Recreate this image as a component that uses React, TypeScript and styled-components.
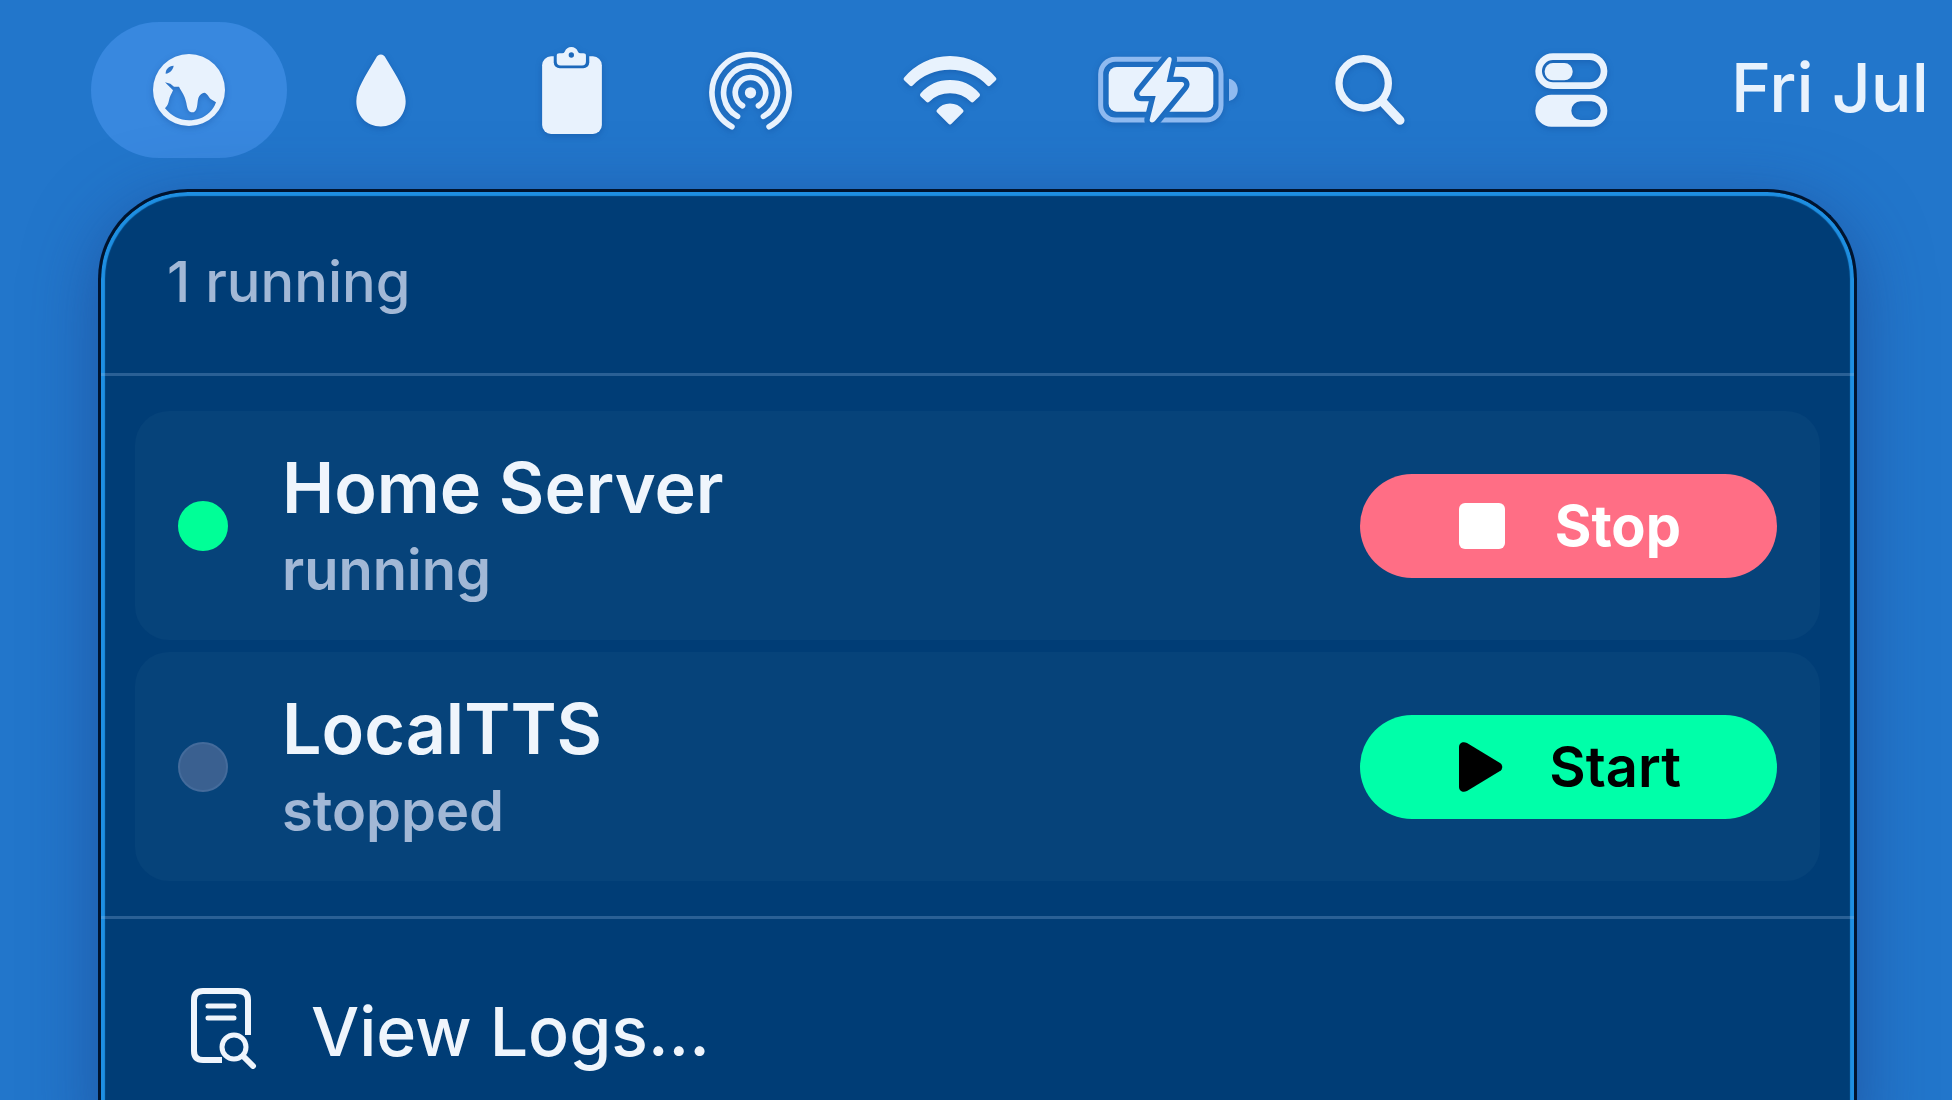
import React from "react";
import styled, { createGlobalStyle } from "styled-components";

const GlobalStyle = createGlobalStyle`
  *, *::before, *::after { box-sizing: border-box; }
  html, body, #root { height: 100%; }
  body {
    margin: 0;
    overflow: hidden;
    background: #2276cb;
    font-family: Inter, "Liberation Sans", sans-serif;
  }
  button {
    border: 0;
    padding: 0;
    background: none;
    color: inherit;
    font: inherit;
    cursor: pointer;
  }
  svg { display: block; flex: none; }
`;

const Desktop = styled.div`
  height: 100%;
  display: flex;
  flex-direction: column;
  overflow: hidden;
`;

const MenuBar = styled.header`
  flex: none;
  display: flex;
  align-items: center;
  padding: 22px 0 31px 91px;
  color: #e8f2fd;
`;

const StatusItem = styled.button<{ $width: number; $active?: boolean }>`
  flex: none;
  width: ${(p) => p.$width}px;
  height: 136px;
  display: flex;
  align-items: center;
  justify-content: center;
  border-radius: 68px;
  background: ${(p) => (p.$active ? "#3888df" : "transparent")};

  svg {
    fill: currentColor;
    filter: drop-shadow(0 2px 3px rgba(0, 40, 110, 0.25));
  }
`;

const Clock = styled.time`
  flex: none;
  margin-left: 62px;
  padding-bottom: 6px;
  font-size: 68px;
  line-height: 88px;
  font-weight: 500;
  white-space: nowrap;
`;

const Panel = styled.main`
  flex: 1 0 auto;
  margin: 0 95px 0 98px;
  border: 3px solid #00142f;
  border-bottom: 0;
  border-radius: 90px 90px 0 0;
  background: #003d76;
  box-shadow:
    inset 0 0 1px 4px #1e8fe2,
    0 16px 70px rgba(30, 60, 130, 0.55);
  color: #eff5fc;
`;

const PanelHeader = styled.div`
  padding: 52px 66px 53px;
  font-size: 56px;
  line-height: 76px;
  font-weight: 500;
  color: #a2b8d6;
`;

const Divider = styled.hr`
  height: 3px;
  margin: 0;
  border: 0;
  background: rgba(150, 185, 230, 0.28);
`;

const ServiceList = styled.ul`
  list-style: none;
  margin: 0;
  padding: 35px 34px;
  display: flex;
  flex-direction: column;
  gap: 12px;
`;

const ServiceCard = styled.li`
  height: 229px;
  display: flex;
  align-items: center;
  padding: 0 43px;
  border-radius: 34px;
  background: #06437a;
`;

const StatusDot = styled.span<{ $on: boolean }>`
  flex: none;
  width: 50px;
  height: 50px;
  border-radius: 50%;
  border: 2px solid ${(p) => (p.$on ? "#00ff97" : "#446b9b")};
  background: ${(p) => (p.$on ? "#00ff97" : "#3a6090")};
`;

const ServiceText = styled.div`
  flex: 1;
  min-width: 0;
  margin-left: 54px;
`;

const ServiceName = styled.h2`
  margin: 0;
  font-size: 70px;
  line-height: 88px;
  font-weight: 600;
`;

const ServiceState = styled.p`
  margin: 0;
  font-size: 56px;
  line-height: 76px;
  font-weight: 600;
  color: #a2b8d6;
`;

const ActionButton = styled.button<{ $kind: "stop" | "start" }>`
  && {
    flex: none;
    width: 417px;
    height: 104px;
    padding: 0 96px 0 99px;
    display: flex;
    align-items: center;
    justify-content: space-between;
    border-radius: 52px;
    font-size: 56px;
    line-height: 68px;
    font-weight: ${(p) => (p.$kind === "stop" ? 700 : 600)};
    color: ${(p) => (p.$kind === "stop" ? "#ffffff" : "#000000")};
    background: ${(p) => (p.$kind === "stop" ? "#ff6e85" : "#00ffa9")};
  }
`;

const MenuRow = styled.button`
  && {
    width: 100%;
    height: 218px;
    display: flex;
    align-items: center;
    gap: 54px;
    padding: 0 90px;
    text-align: left;
    font-size: 68px;
    line-height: 88px;
    font-weight: 500;
  }
`;

const MenuLabel = styled.span`
  padding-top: 6px;
`;

const GlobeIcon = () => (
  <svg width="72" height="72" viewBox="220 131 216 216" aria-hidden="true">
    <path
      fillRule="evenodd"
      d="M328 131a108 108 0 1 0 0 216a108 108 0 1 0 0-216Z
         M256 216L272 220L283 229L298 229C306 245 316 255 320 278C323 298 328 306 338 306C350 306 352 292 354 274C356 256 364 248 375 247C384 250 386 260 394 267L409 276C404 290 398 298 390 306C372 324 350 330 328 330C300 330 276 318 256 294C264 286 266 280 268 270C270 258 276 250 280 240Z
         M258 188C259 176 266 168 282 166C280 178 272 188 258 190Z"
    />
  </svg>
);

const DropIcon = () => (
  <svg width="50" height="73" viewBox="826 130 151 219" aria-hidden="true">
    <path d="M901 131C908 131 912 135 916 142C950 200 976 235 976 272C976 316 944 348 901 348C858 348 827 316 827 272C827 235 852 200 886 142C890 135 894 131 901 131Z" />
  </svg>
);

const ClipboardIcon = () => (
  <svg width="60" height="87" viewBox="126 50 180 262" aria-hidden="true">
    <mask id="clip-cut" maskUnits="userSpaceOnUse" x="120" y="40" width="200" height="280">
      <rect x="120" y="40" width="200" height="280" fill="#fff" />
      <rect x="161" y="54" width="107" height="60" rx="18" fill="#000" />
    </mask>
    <rect x="126" y="78" width="180" height="234" rx="27" mask="url(#clip-cut)" />
    <path
      fillRule="evenodd"
      d="M170 76q0-7 8-7h8q6 0 8-5q6-14 20-14t20 14q2 5 8 5h8q8 0 8 7v18q0 12-12 12h-64q-12 0-12-12ZM214 66a8 8 0 1 0 0 16a8 8 0 1 0 0-16Z"
    />
  </svg>
);

const AirDropIcon = () => (
  <svg width="83" height="79" viewBox="626 60 250 238" aria-hidden="true">
    <circle cx="751" cy="186" r="17" />
    <g fill="none" stroke="currentColor" strokeWidth="17" strokeLinecap="round">
      <path d="M695 288A116 116 0 1 1 807 288" />
      <path d="M712 257A81 81 0 1 1 790 257" />
      <path d="M727 225A46 46 0 1 1 775 225" />
    </g>
  </svg>
);

const WifiIcon = () => (
  <svg width="94" height="69" viewBox="70 74 282 208" aria-hidden="true">
    <g stroke="currentColor" strokeWidth="13" strokeLinejoin="round">
      <path d="M78 143A173 173 0 0 1 344 143L328 158A164 164 0 0 0 94 158Z" />
      <path d="M127 191A112 112 0 0 1 295 191L278 207A97 97 0 0 0 144 207Z" />
      <path d="M177 240A43 43 0 0 1 245 240L211 274Z" />
    </g>
  </svg>
);

const BOLT =
  "M864 85C869 80 876 84 875 92L860 158H904C912 158 915 165 910 171L825 275C819 282 808 280 809 271L827 200H785C778 200 776 193 780 188Z";

const BatteryIcon = () => (
  <svg width="140" height="68" viewBox="654 80 420 204" aria-hidden="true">
    <mask id="bolt-cut" maskUnits="userSpaceOnUse" x="640" y="70" width="440" height="230">
      <rect x="640" y="70" width="440" height="230" fill="#fff" />
      <path d={BOLT} fill="#000" stroke="#000" strokeWidth="32" strokeLinejoin="round" />
    </mask>
    <g mask="url(#bolt-cut)">
      <rect x="662" y="90" width="361" height="182" rx="44" fill="none" stroke="#8fbaf0" strokeWidth="15" />
      <rect x="686" y="113" width="314" height="134" rx="24" />
    </g>
    <path d={BOLT} />
    <path d="M1047 148C1082 154 1082 209 1047 215Z" fill="#8fbaf0" />
  </svg>
);

const SearchIcon = () => (
  <svg width="70" height="72" viewBox="76 68 210 216" aria-hidden="true">
    <g fill="none" stroke="currentColor" strokeLinecap="round">
      <circle cx="162" cy="156" r="74" strokeWidth="22" />
      <path d="M218 211L271 267" strokeWidth="27" />
    </g>
  </svg>
);

const ControlsIcon = () => (
  <svg width="73" height="74" viewBox="676 67 219 222" aria-hidden="true">
    <rect x="687" y="78" width="196" height="87" rx="43" fill="none" stroke="currentColor" strokeWidth="20" />
    <rect x="705" y="97" width="84" height="52" rx="25" />
    <path
      fillRule="evenodd"
      d="M725 192H845a48 48 0 0 1 0 96H725a48 48 0 0 1 0-96ZM813 212a28 28 0 0 0 0 56h32a28 28 0 0 0 0-56Z"
    />
  </svg>
);

const StopGlyph = () => (
  <svg width="46" height="46" viewBox="0 0 46 46" fill="currentColor" aria-hidden="true">
    <rect width="46" height="46" rx="6" />
  </svg>
);

const PlayGlyph = () => (
  <svg width="44" height="50" viewBox="0 0 44 50" fill="currentColor" aria-hidden="true">
    <path d="M0 5C0 1 4-1 8 1L41 21C44 23 44 27 41 29L8 49C4 51 0 49 0 45Z" />
  </svg>
);

const LogsIcon = () => (
  <svg width="66" height="82" viewBox="191 987 66 82" fill="none" stroke="currentColor" strokeLinecap="round" aria-hidden="true">
    <path
      d="M222 1060H203Q194 1060 194 1051V1000Q194 991 203 991H238Q248 991 248 1000V1035"
      strokeWidth="6"
      strokeLinecap="butt"
    />
    <path d="M208 1006H234M208 1018H234" strokeWidth="5" />
    <circle cx="234" cy="1047" r="12" strokeWidth="5" />
    <path d="M243 1056L253 1066" strokeWidth="6" />
  </svg>
);

const statusItems = [
  { label: "Local servers", width: 196, icon: <GlobeIcon />, active: true },
  { label: "Drop", width: 187, icon: <DropIcon /> },
  { label: "Clipboard", width: 196, icon: <ClipboardIcon /> },
  { label: "AirDrop", width: 161, icon: <AirDropIcon /> },
  { label: "Wi-Fi", width: 238, icon: <WifiIcon /> },
  { label: "Battery", width: 198, icon: <BatteryIcon /> },
  { label: "Search", width: 206, icon: <SearchIcon /> },
  { label: "Control Center", width: 196, icon: <ControlsIcon /> },
];

const services = [
  { name: "Home Server", running: true },
  { name: "LocalTTS", running: false },
];

export default function App() {
  return (
    <>
      <GlobalStyle />
      <Desktop>
        <MenuBar>
          {statusItems.map((item) => (
            <StatusItem key={item.label} type="button" aria-label={item.label} $width={item.width} $active={item.active}>
              {item.icon}
            </StatusItem>
          ))}
          <Clock>Fri Jul</Clock>
        </MenuBar>
        <Panel>
          <PanelHeader>1 running</PanelHeader>
          <Divider />
          <ServiceList>
            {services.map((s) => (
              <ServiceCard key={s.name}>
                <StatusDot $on={s.running} />
                <ServiceText>
                  <ServiceName>{s.name}</ServiceName>
                  <ServiceState>{s.running ? "running" : "stopped"}</ServiceState>
                </ServiceText>
                <ActionButton type="button" $kind={s.running ? "stop" : "start"}>
                  {s.running ? <StopGlyph /> : <PlayGlyph />}
                  {s.running ? "Stop" : "Start"}
                </ActionButton>
              </ServiceCard>
            ))}
          </ServiceList>
          <Divider />
          <MenuRow type="button">
            <LogsIcon />
            <MenuLabel>View Logs...</MenuLabel>
          </MenuRow>
        </Panel>
      </Desktop>
    </>
  );
}
